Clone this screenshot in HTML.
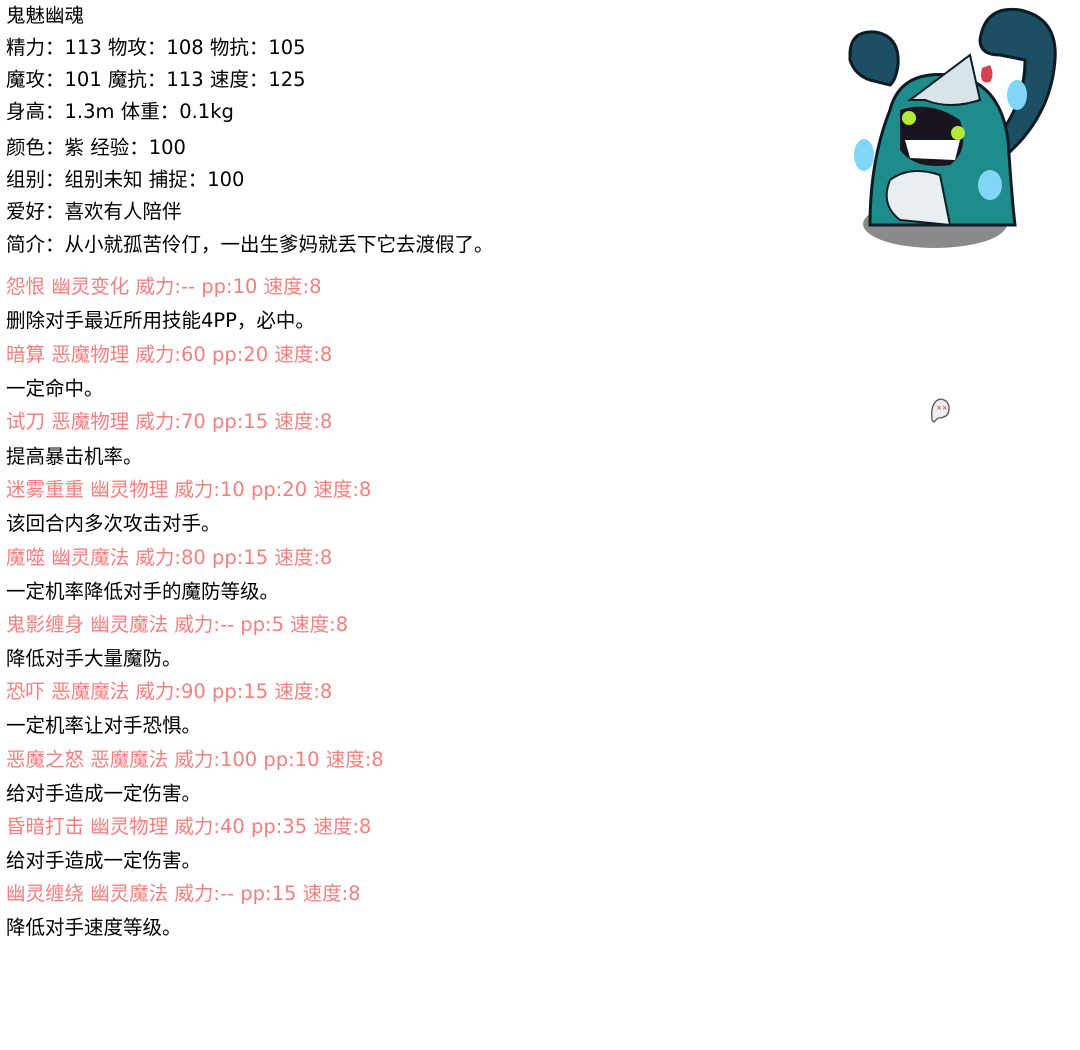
<!DOCTYPE html>
<html><head><meta charset="utf-8"><style>
html,body{margin:0;padding:0;background:#fff;width:1080px;height:1050px;overflow:hidden}
body{position:relative;font-family:"DejaVu Sans","Noto Sans CJK SC",sans-serif;font-size:19.5px;color:#000}
.l{position:absolute;left:6px;line-height:26px;white-space:nowrap}
.p{color:#f47f7f}
</style></head><body>
<div class="l" style="top:3px">鬼魅幽魂</div>
<div class="l" style="top:35px">精力：113 物攻：108 物抗：105</div>
<div class="l" style="top:67px">魔攻：101 魔抗：113 速度：125</div>
<div class="l" style="top:99px">身高：1.3m 体重：0.1kg</div>
<div class="l" style="top:135px">颜色：紫 经验：100</div>
<div class="l" style="top:167px">组别：组别未知 捕捉：100</div>
<div class="l" style="top:199px">爱好：喜欢有人陪伴</div>
<div class="l" style="top:232px">简介：从小就孤苦伶仃，一出生爹妈就丢下它去渡假了。</div>
<div class="l p" style="top:274px">怨恨 幽灵变化 威力:-- pp:10 速度:8</div>
<div class="l" style="top:308px">删除对手最近所用技能4PP，必中。</div>
<div class="l p" style="top:342px">暗算 恶魔物理 威力:60 pp:20 速度:8</div>
<div class="l" style="top:376px">一定命中。</div>
<div class="l p" style="top:409px">试刀 恶魔物理 威力:70 pp:15 速度:8</div>
<div class="l" style="top:444px">提高暴击机率。</div>
<div class="l p" style="top:477px">迷雾重重 幽灵物理 威力:10 pp:20 速度:8</div>
<div class="l" style="top:511px">该回合内多次攻击对手。</div>
<div class="l p" style="top:545px">魔噬 幽灵魔法 威力:80 pp:15 速度:8</div>
<div class="l" style="top:579px">一定机率降低对手的魔防等级。</div>
<div class="l p" style="top:612px">鬼影缠身 幽灵魔法 威力:-- pp:5 速度:8</div>
<div class="l" style="top:646px">降低对手大量魔防。</div>
<div class="l p" style="top:679px">恐吓 恶魔魔法 威力:90 pp:15 速度:8</div>
<div class="l" style="top:713px">一定机率让对手恐惧。</div>
<div class="l p" style="top:747px">恶魔之怒 恶魔魔法 威力:100 pp:10 速度:8</div>
<div class="l" style="top:781px">给对手造成一定伤害。</div>
<div class="l p" style="top:814px">昏暗打击 幽灵物理 威力:40 pp:35 速度:8</div>
<div class="l" style="top:848px">给对手造成一定伤害。</div>
<div class="l p" style="top:881px">幽灵缠绕 幽灵魔法 威力:-- pp:15 速度:8</div>
<div class="l" style="top:915px">降低对手速度等级。</div>

<svg style="position:absolute;left:830px;top:0" width="240" height="260" viewBox="0 0 240 260">
<ellipse cx="105" cy="224" rx="72" ry="24" fill="#8a8a8a"/>
<path d="M20 55 Q20 30 45 32 Q70 36 68 65 Q66 80 60 85 L40 80 Q25 75 20 60Z" fill="#1c4f63" stroke="#0c1c24" stroke-width="3"/>
<path d="M150 40 Q155 5 190 10 Q228 18 225 60 Q220 130 150 175 L140 165 Q195 120 195 60 L170 55 Q150 55 150 40Z" fill="#1c4f63" stroke="#0c1c24" stroke-width="3"/>
<path d="M60 110 Q70 70 120 75 Q170 80 178 140 Q182 200 185 225 L40 225 Q40 160 60 110Z" fill="#1d8c8a" stroke="#0c1c24" stroke-width="3"/>
<path d="M80 100 L140 55 L150 100 Q120 110 95 100Z" fill="#d8e4ea" stroke="#0c1c24" stroke-width="2"/>
<path d="M70 110 Q100 100 130 120 Q140 150 120 165 Q85 170 70 150Z" fill="#1a1320"/>
<path d="M75 140 L130 140 L125 160 L80 158Z" fill="#fff"/>
<circle cx="79" cy="118" r="7" fill="#b5e83a"/>
<circle cx="128" cy="133" r="7" fill="#b5e83a"/>
<path d="M60 180 Q80 165 110 175 L120 225 L70 220 Q50 205 60 180Z" fill="#e8eef2" stroke="#0c1c24" stroke-width="2"/>
<ellipse cx="34" cy="155" rx="10" ry="16" fill="#7fd6f6"/>
<ellipse cx="160" cy="185" rx="12" ry="15" fill="#7fd6f6"/>
<ellipse cx="187" cy="95" rx="10" ry="15" fill="#7fd6f6"/>
<path d="M152 68 Q148 85 160 82 Q165 75 160 65Z" fill="#d84050"/>
</svg>
<svg style="position:absolute;left:928px;top:396px" width="24" height="28" viewBox="0 0 24 28">
<path d="M4 24 Q2 6 12 3 Q22 4 21 14 Q20 22 10 22 L6 26Z" fill="#eee" stroke="#555" stroke-width="1.3"/>
<text x="8" y="14" font-size="7" fill="#a33">××</text>
</svg>
</body></html>
